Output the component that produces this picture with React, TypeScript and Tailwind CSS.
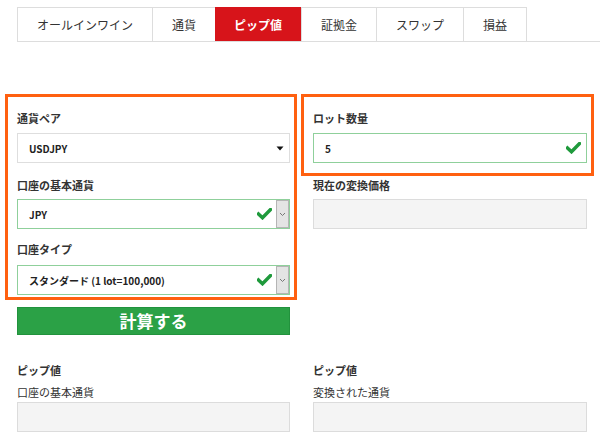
import React from "react";

const TABS = ["オールインワイン", "通貨", "ピップ値", "証拠金", "スワップ", "損益"];
const ACTIVE = "ピップ値";

function Check() {
  return (
    <svg width="15" height="12" viewBox="0 0 15 12" className="shrink-0">
      <path d="M1.5 6 L5.5 9.8 L13.5 1.5" fill="none" stroke="#1f9a3c" strokeWidth="3.4" strokeLinecap="square" />
    </svg>
  );
}

function Label({ children, bold = true }: { children: React.ReactNode; bold?: boolean }) {
  return (
    <div className={`h-4 text-[11px] leading-4 text-[#333] ${bold ? "font-bold" : "font-normal"}`}>{children}</div>
  );
}

function SelectWithCheck({ value }: { value: string }) {
  return (
    <div className="flex h-[30px] items-stretch border border-[#8fd09b] bg-white">
      <div className="flex flex-1 items-center pl-[11px] text-[10px] font-bold text-[#222]">{value}</div>
      <div className="flex items-center pr-[4px]">
        <Check />
      </div>
      <div className="flex w-[13px] items-center justify-center border border-[#b5b5b5] bg-[#e4e4e4]">
        <svg width="7" height="5" viewBox="0 0 7 5">
          <path d="M1 1 L3.5 3.5 L6 1" fill="none" stroke="#777" strokeWidth="1" />
        </svg>
      </div>
    </div>
  );
}

function EmptyBox() {
  return <div className="h-[30px] border border-[#dcdcdc] bg-[#f4f4f4]" />;
}

export default function App() {
  return (
    <div
      className="h-[442px] w-[600px] overflow-hidden bg-white pt-[7px]"
      style={{ fontFamily: '"Noto Sans CJK JP", "Noto Sans", sans-serif' }}
    >
      {/* tabs */}
      <div className="ml-[17px] flex h-[35px] border-b border-[#dddddd]">
        {TABS.map((t, i) => (
          <div
            key={t}
            className={`flex items-center px-[19px] text-[12px] ${
              t === ACTIVE
                ? "border-t border-[#d7141a] bg-[#d7141a] font-bold text-white"
                : "border-t border-l border-[#dddddd] text-[#333]"
            } ${i === TABS.length - 1 ? "border-r" : ""}`}
          >
            {t}
          </div>
        ))}
      </div>

      {/* form */}
      <div className="mt-[52px] grid grid-cols-[292px_293px] items-start gap-x-[4px] pl-[5px]">
        <div>
          <div className="border-[3px] border-[#ff6010] pb-[2px] pl-[9px] pr-[4px] pt-[13px]">
            <Label>通貨ペア</Label>
            <div className="mt-[7px] flex h-[30px] items-center border border-[#dedede] bg-white pl-[11px] pr-[4px]">
              <span className="flex-1 text-[10px] font-bold text-[#222]">USDJPY</span>
              <svg width="8" height="5" viewBox="0 0 8 5" className="mr-[1px]">
                <path d="M0.5 0.5 L7.5 0.5 L4 4.5 Z" fill="#111" />
              </svg>
            </div>
            <div className="mt-[14px]">
              <Label>口座の基本通貨</Label>
            </div>
            <div className="mt-[6px]">
              <SelectWithCheck value="JPY" />
            </div>
            <div className="mt-[12px]">
              <Label>口座タイプ</Label>
            </div>
            <div className="mt-[8px]">
              <SelectWithCheck value="スタンダード (1 lot=100,000)" />
            </div>
          </div>
          <button
            type="button"
            className="ml-[12px] mt-[7px] flex h-[28px] w-[273px] items-center justify-center border border-[#22923d] bg-[#2ba146] text-[17px] font-bold text-white"
          >
            計算する
          </button>
        </div>

        <div>
          <div className="border-[3px] border-[#ff6010] pb-[10px] pl-[9px] pr-[4px] pt-[13px]">
            <Label>ロット数量</Label>
            <div className="mt-[7px] flex h-[30px] items-center border border-[#8fd09b] bg-white pl-[11px] pr-[5px]">
              <span className="flex-1 text-[10px] font-bold text-[#222]">5</span>
              <Check />
            </div>
          </div>
          <div className="pl-[12px] pr-[7px]">
            <div className="mt-[1px]">
              <Label>現在の変換価格</Label>
            </div>
            <div className="mt-[6px]">
              <EmptyBox />
            </div>
          </div>
        </div>
      </div>

      {/* results */}
      <div className="mt-[27px] grid grid-cols-[292px_293px] gap-x-[4px] pl-[5px]">
        <div className="pl-[12px] pr-[7px]">
          <Label>ピップ値</Label>
          <div className="mt-[6px]">
            <Label bold={false}>口座の基本通貨</Label>
          </div>
          <div className="mt-[2px]">
            <EmptyBox />
          </div>
        </div>
        <div className="pl-[12px] pr-[7px]">
          <Label>ピップ値</Label>
          <div className="mt-[6px]">
            <Label bold={false}>変換された通貨</Label>
          </div>
          <div className="mt-[2px]">
            <EmptyBox />
          </div>
        </div>
      </div>
    </div>
  );
}
